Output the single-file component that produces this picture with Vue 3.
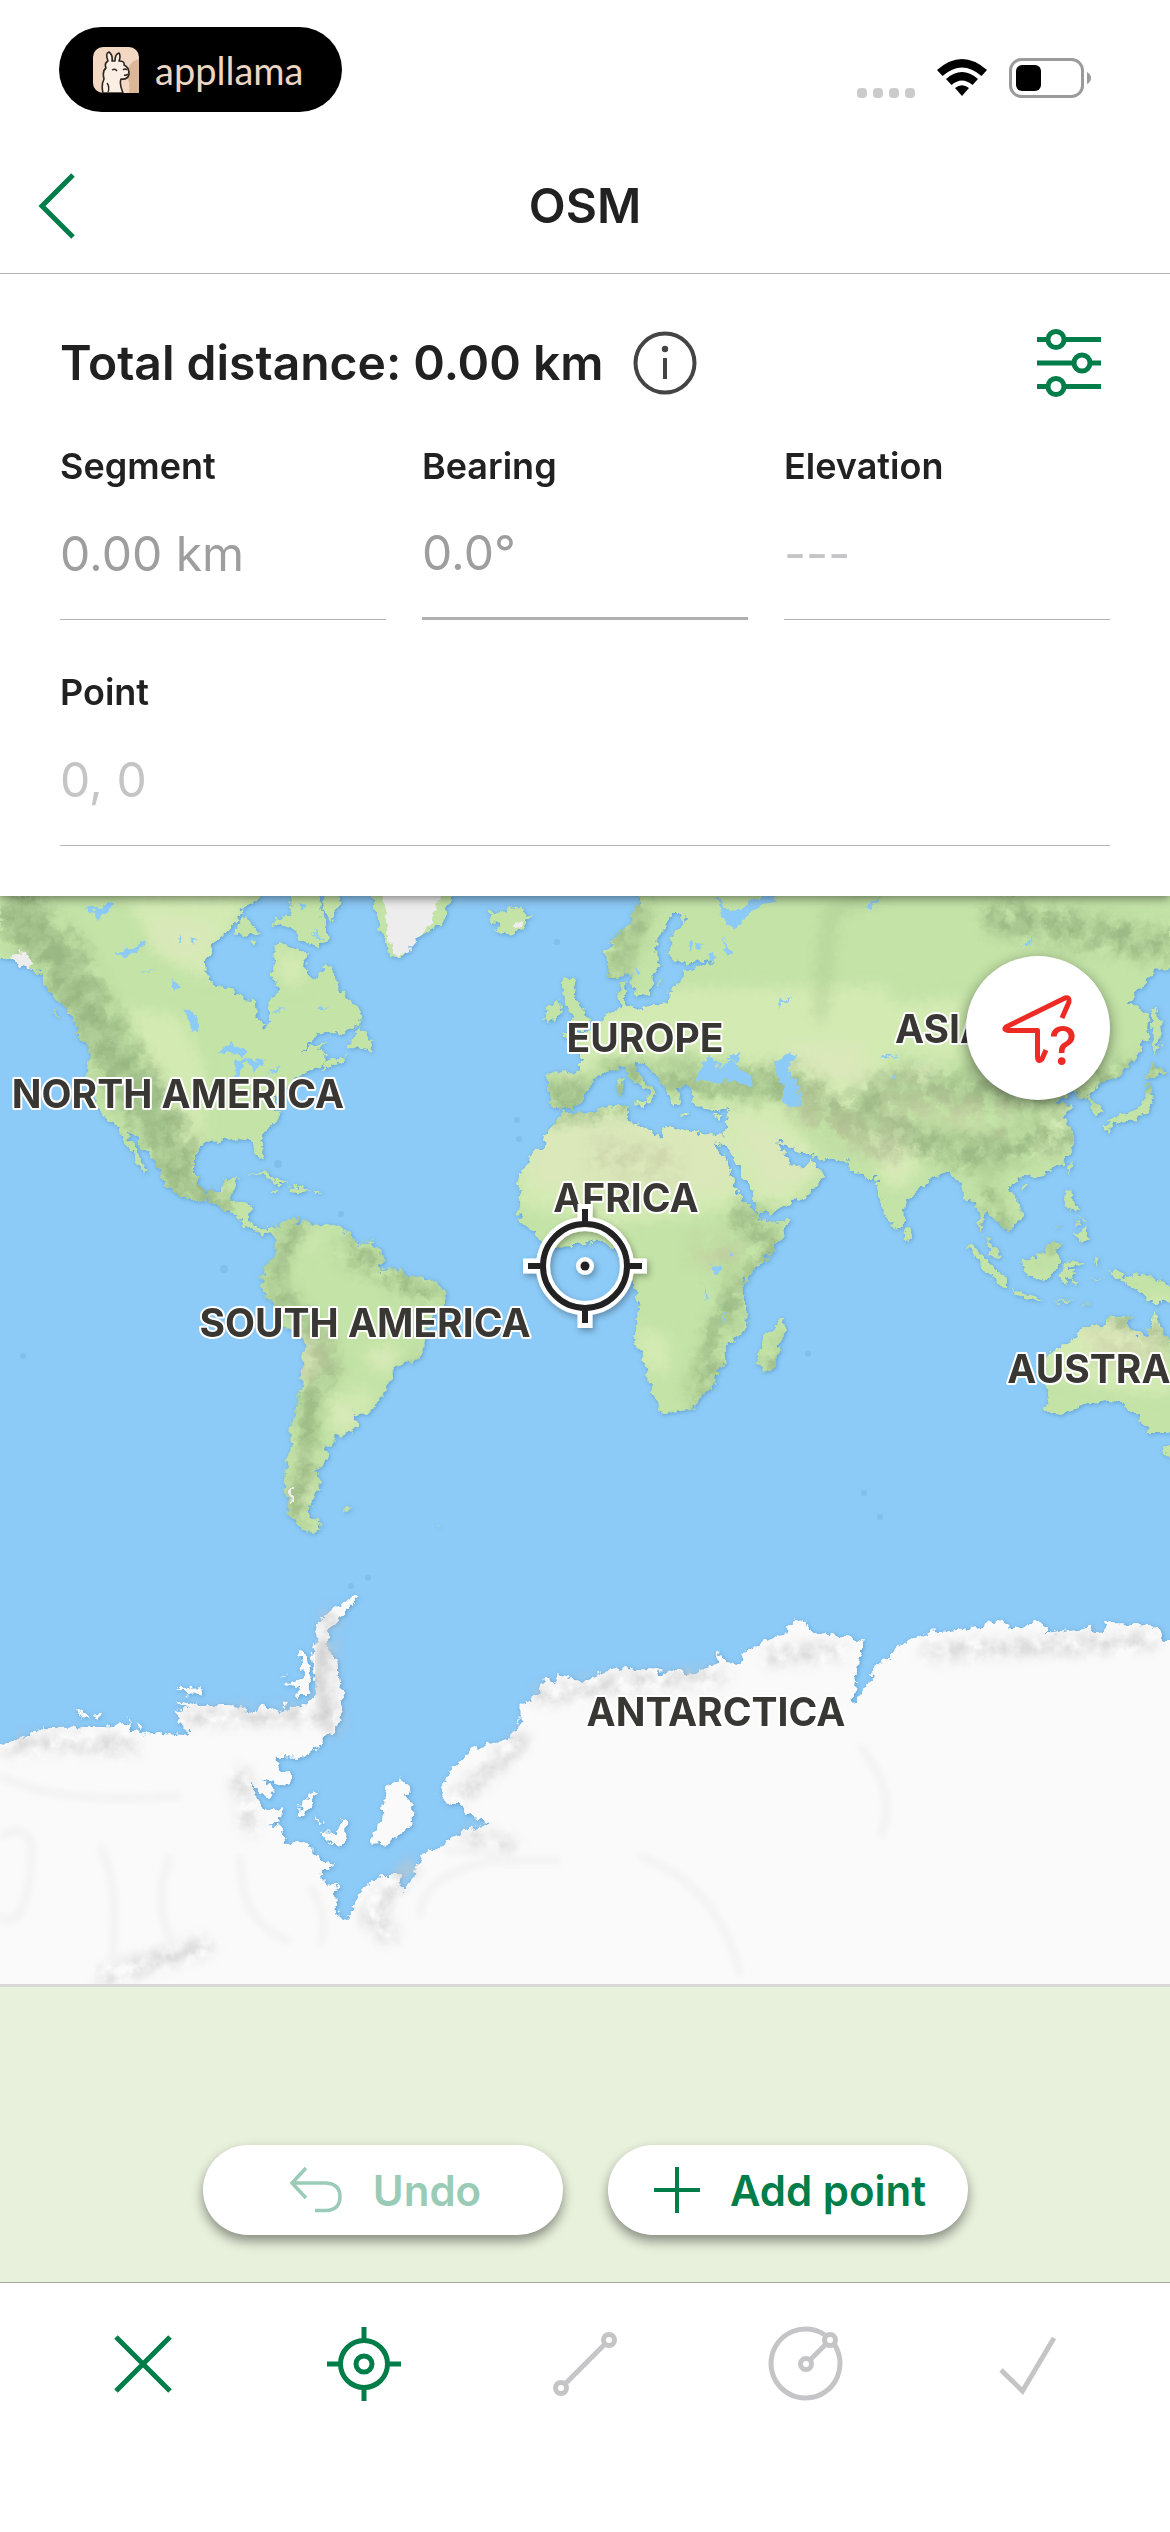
<script setup>
import { reactive } from 'vue'

const fields = reactive([
  { id: 'segment', label: 'Segment', value: '0.00 km', hint: '' },
  { id: 'bearing', label: 'Bearing', value: '0.0°', hint: '', active: true },
  { id: 'elevation', label: 'Elevation', value: '', hint: '---' },
  { id: 'point', label: 'Point', value: '', hint: '0, 0', wide: true },
])

const continents = [
  { name: 'NORTH AMERICA', x: 178, y: 212 },
  { name: 'SOUTH AMERICA', x: 365, y: 441 },
  { name: 'EUROPE', x: 645, y: 156 },
  { name: 'AFRICA', x: 626, y: 316 },
  { name: 'ASIA', x: 942, y: 147 },
  { name: 'AUSTRALIA', x: 1120, y: 487 },
  { name: 'ANTARCTICA', x: 716, y: 830 },
]
</script>

<template>
  <div class="screen">
    <div class="status">
      <div class="pill">
        <svg class="llama" viewBox="0 0 46 46" aria-hidden="true">
          <rect width="46" height="46" rx="10" fill="#f3d9c3" />
          <path d="M31 24 Q38 34 36 46 H46 V12 Q38 14 36 20Z" fill="#dcb797" />
          <path d="M10 46 Q8 38 11 32 Q9 24 13 21 Q11 16 15 14 Q12 6 16 5 Q20 8 19 14 L22 14 Q22 7 26 6 Q28 9 26 14 Q32 14 31 18 Q36 20 36 27 Q35 33 28 32 Q26 37 30 46Z" fill="#fbeee2" stroke="#2b2521" stroke-width="1.6" stroke-linejoin="round" />
          <path d="M19 23 q3 -2 5 1 M30 23 q2 -2 4 0 M31 28 q2 1 4 -1 M14 36 q3 4 1 9" fill="none" stroke="#2b2521" stroke-width="1.4" />
        </svg>
        <span class="brand">appllama</span>
      </div>
      <div class="signals">
        <span class="dots"><i></i><i></i><i></i><i></i></span>
        <svg width="50" height="38" viewBox="0 0 50 38" aria-hidden="true">
          <path d="M0 11 Q25 -11 50 11 L44.500 17 Q25 0 5.500 17Z M9 20 Q25 6 41 20 L35.500 26 Q25 17 14.500 26Z M18 29 Q25 23.500 32 29 L25 37Z" />
        </svg>
        <svg width="83" height="40" viewBox="0 0 83 40" aria-hidden="true">
          <rect x="1.500" y="1.500" width="72" height="37" rx="11" fill="none" stroke="#9b9b9b" stroke-width="3" />
          <rect x="7" y="7" width="25" height="26" rx="6" />
          <path d="M78 14 Q82 16 82 20 Q82 24 78 26Z" fill="#9b9b9b" />
        </svg>
      </div>
    </div>

    <header class="nav">
      <button class="back" aria-label="Back">
        <svg width="40" height="66" viewBox="0 0 40 66"><path d="M37 2 L6 33 L37 64" fill="none" stroke="#007d49" stroke-width="5" /></svg>
      </button>
      <h1>OSM</h1>
    </header>

    <section class="panel">
      <div class="total">
        <h2>Total distance: 0.00 km</h2>
        <button aria-label="Information">
          <svg width="64" height="64" viewBox="0 0 64 64">
            <circle cx="32" cy="32" r="29.500" fill="none" stroke="#444" stroke-width="4" />
            <path d="M32 27 V48" stroke="#444" stroke-width="4" />
            <circle cx="32" cy="18" r="3.200" fill="#444" />
          </svg>
        </button>
        <button class="tune" aria-label="Settings">
          <svg width="64" height="70" viewBox="0 0 64 70" fill="none" stroke="#007d49" stroke-width="5">
            <path d="M0 11.500 H10 M28 11.500 H64 M0 35 H36 M54 35 H64 M0 58.500 H10 M28 58.500 H64" />
            <circle cx="19" cy="11.500" r="8" /><circle cx="45" cy="35" r="8" /><circle cx="19" cy="58.500" r="8" />
          </svg>
        </button>
      </div>
      <div class="fields">
        <div v-for="f in fields" :key="f.id" class="field" :class="{ wide: f.wide, active: f.active }">
          <label :for="f.id">{{ f.label }}</label>
          <input :id="f.id" v-model="f.value" type="text" :placeholder="f.hint" />
        </div>
      </div>
    </section>

    <main class="stage">
      <svg class="map" viewBox="0 0 1170 1088" role="img" aria-label="World map">
        <defs>
          <filter id="coast" x="0" y="0" width="1170" height="1088" filterUnits="userSpaceOnUse" color-interpolation-filters="sRGB">
            <feTurbulence type="fractalNoise" baseFrequency=".13" numOctaves="3" seed="4" result="n" />
            <feDisplacementMap in="SourceGraphic" in2="n" scale="11" xChannelSelector="R" yChannelSelector="G" result="d" />
            <feDropShadow in="d" dx="1" dy="1" stdDeviation="2" flood-color="#3f7fb4" flood-opacity=".55" />
          </filter>
          <filter id="relief" x="0" y="0" width="1170" height="1088" filterUnits="userSpaceOnUse" color-interpolation-filters="sRGB">
            <feGaussianBlur in="SourceGraphic" stdDeviation="7" result="b" />
            <feTurbulence type="fractalNoise" baseFrequency=".06" numOctaves="4" seed="9" />
            <feColorMatrix values="0 0 0 0 0  0 0 0 0 0  0 0 0 0 0  2.2 0 0 0 -.55" result="n" />
            <feComposite in="b" in2="n" operator="in" />
          </filter>
          <filter id="soft" x="-20%" y="-20%" width="140%" height="140%"><feGaussianBlur stdDeviation="7" /></filter>
          <filter id="faint" x="-20%" y="-20%" width="140%" height="140%"><feGaussianBlur stdDeviation="3" /></filter>
          <filter id="lift" x="-30%" y="-30%" width="160%" height="160%"><feDropShadow dx="2" dy="3" stdDeviation="3" flood-opacity=".3" /></filter>

          <g id="land">
            <g transform="matrix(.33333 0 0 .33333 0 -6)">
              <path d="M-20 -20 V205 L40 215 95 232 130 270 160 320 195 350 215 385 240 430 270 480 267 560 290 640 320 690 350 705 375 755 400 800 425 845 440 842 420 800 395 755 378 722 400 730 440 790 480 840 492 885 540 915 590 935 615 925 650 950 700 968 730 1005 760 1025 790 1037 805 1022 835 1050 835 1022 815 1012 795 1010 770 1018 748 990 755 940 715 935 690 935 697 900 712 865 675 868 660 900 615 905 585 860 585 790 615 755 660 755 680 745 715 745 750 750 765 780 780 812 795 808 780 740 840 680 820 640 835 610 880 580 910 550 950 530 985 520 975 500 980 485 950 478 980 455 940 465 905 490 960 430 1040 430 1085 395 1082 365 1040 325 1015 290 1000 250 978 215 960 255 940 265 918 245 920 200 890 175 860 165 820 165 828 210 815 245 838 300 805 340 810 380 795 408 770 380 768 335 735 330 690 295 640 285 620 250 618 210 640 160 680 125 710 95 720 60 760 40 780 20 V-20Z" />
              <path d="M880 -20 H950 L975 100 980 150 960 175 900 150 870 110 820 105 825 85 870 80Z M970 0 H1015 L1020 50 990 90 970 60Z M730 68 750 100 785 128 740 138 708 130 718 90Z M750 155 770 150 760 168Z M1045 475 1080 405 1110 450 1122 485 1080 475Z M960 540 985 515 1038 498 1025 517Z M740 858 790 845 862 882 830 882 790 856Z M862 905 885 888 935 900 900 910Z M948 903 H970 V909 H948Z M816 903 H840 V909 H816Z M218 420 250 430 288 470 280 487 240 445Z M160 353 180 388 168 380Z" />
              <path d="M1105 -20 1125 60 1150 130 1175 200 1205 205 1240 160 1330 90 1370 -20Z" />
            </g>
            <g transform="matrix(.33333 0 0 .33333 0 294)">
              <path d="M815 120 850 95 895 80 890 110 910 92 960 105 1010 100 1050 140 1070 158 1110 155 1140 180 1152 212 1135 240 1190 235 1225 260 1280 262 1325 290 1337 320 1325 355 1295 385 1278 450 1260 505 1215 520 1180 540 1172 580 1145 620 1110 670 1075 675 1055 660 1072 705 1055 730 1010 735 1005 765 970 770 985 795 968 830 945 850 965 875 940 920 925 965 970 1018 930 1030 890 1005 865 965 855 900 850 860 870 780 872 710 895 650 900 590 910 520 910 450 850 410 820 350 782 290 790 240 830 185Z M1022 965 1035 950 1060 955 1040 963Z M1305 1000 1325 1015 1318 1003Z" />
            </g>
            <g transform="matrix(.33333 0 0 .34435 480 -6)">
              <path d="M500 -20 460 80 400 140 378 180 385 245 410 258 445 235 455 280 480 315 510 295 520 250 540 220 525 170 545 120 575 70 615 70 610 95 575 130 572 190 600 215 665 205 700 210 650 225 610 230 600 270 570 285 568 325 530 335 465 345 440 335 435 315 440 270 418 275 415 310 430 345 385 355 370 380 335 400 310 420 250 415 300 470 300 530 205 530 205 600 215 625 245 640 300 625 315 590 355 540 385 525 430 515 460 560 505 585 500 615 515 620 520 590 535 590 490 550 465 515 468 495 500 510 545 560 570 600 585 632 605 610 585 575 615 570 635 575 640 615 670 635 720 640 748 630 740 680 730 710 665 710 580 688 555 690 545 720 510 705 480 685 440 665 445 628 380 632 320 650 250 648 200 705 195 735 145 780 115 830 118 900 115 945 170 1005 210 1035 290 1030 360 1018 400 1040 440 1040 450 1080 455 1150 480 1210 457 1290 490 1360 505 1430 545 1520 630 1510 705 1435 710 1390 740 1375 735 1330 800 1275 800 1215 780 1160 815 1110 870 1060 905 1010 930 955 850 965 830 940 790 900 765 860 745 800 705 730 730 745 760 770 800 850 830 905 835 945 870 935 970 895 1010 860 1032 825 995 780 980 800 930 800 915 760 890 730 920 735 960 765 1000 770 1030 785 1115 785 1160 840 1185 830 1220 830 1220 -20Z" />
              <path d="M250 250 290 265 275 300 305 340 332 375 310 410 255 412 280 380 255 325Z M195 388 200 345 240 320 245 360Z M25 60 60 65 120 50 150 75 140 110 90 130 45 120 65 100 30 95Z M465 615 500 610 495 635Z M416 545 430 540 430 595 416 600Z M597 652 630 655 615 660Z M702 658 725 652 715 664Z M835 1370 850 1300 880 1275 908 1235 918 1270 900 1330 880 1395 850 1395Z M532 265 542 260 535 285Z" />
            </g>
            <g transform="matrix(.33333 0 0 .36996 860 -6)">
              <path d="M-40 -20 H950 V215 H890 L800 305 840 315 868 350 860 400 830 450 780 500 735 515 680 555 715 575 728 600 705 618 690 570 640 550 585 568 640 585 605 610 635 650 635 690 610 740 540 770 490 780 445 800 485 860 485 895 440 920 410 890 375 870 370 900 360 930 385 945 410 970 425 1000 390 985 380 950 355 925 360 880 345 835 320 840 305 800 265 760 220 775 140 840 130 900 105 925 75 880 50 800 45 775 0 765 -40 760Z" />
              <path d="M875 320 890 315 908 400 880 450Z M875 465 920 490 870 512 855 505Z M862 525 880 540 878 570 860 605 810 625 745 635 740 622 800 605 845 578Z M732 635 755 632 745 662Z M617 752 637 735 628 770Z M480 800 505 795 490 815Z M618 815 640 815 638 850 662 868 625 865 612 840Z M640 890 655 905 645 910Z M662 880 680 900 668 900Z M640 935 680 912 693 945 665 950Z M580 922 610 900 588 922Z M320 958 345 965 385 1005 440 1050 442 1078 400 1055 360 1010Z M445 1083 480 1085 550 1105 500 1107Z M485 1000 530 990 580 945 603 960 585 975 600 1000 565 1055 500 1045Z M610 1018 625 1005 680 1003 660 1013 620 1020 625 1030 655 1028 635 1040 645 1065 620 1045 612 1078 602 1045Z M705 1000 718 995 710 1020Z M690 1050 740 1050 715 1055Z M580 1110 650 1110 620 1116Z M660 1125 700 1108 670 1124Z M750 1025 785 1030 790 1050 830 1035 880 1045 950 1080 950 1110 880 1117 830 1080 790 1060 760 1045Z M130 920 145 910 155 940 140 950Z" />
              <path d="M555 1405 568 1370 550 1310 560 1260 640 1215 680 1175 730 1180 750 1145 815 1155 805 1185 865 1210 885 1135 905 1190 950 1240 950 1465 870 1465 835 1420 810 1415 785 1385 745 1378 680 1390 600 1420 570 1420Z M912 1500 950 1508 V1560 L925 1530Z" />
            </g>
          </g>
          <mask id="landmask"><use href="#land" fill="#fff" /></mask>
        </defs>

        <rect width="1170" height="1088" fill="#8ccaf7" />
        <g fill="#78b4e2" opacity=".5">
          <circle cx="557" cy="46" r="3" /><circle cx="517" cy="224" r="3" /><circle cx="519" cy="243" r="3" /><circle cx="341" cy="318" r="3" /><circle cx="224" cy="373" r="4" /><circle cx="23" cy="460" r="3" /><circle cx="808" cy="458" r="3" /><circle cx="368" cy="682" r="3" /><circle cx="351" cy="690" r="3" /><circle cx="864" cy="597" r="3" /><circle cx="880" cy="621" r="3" /><circle cx="278" cy="268" r="4" />
        </g>

        <g filter="url(#coast)">
          <use href="#land" fill="#c3e3a7" />
          <g mask="url(#landmask)">
            <g fill="#d3eab3" filter="url(#soft)">
              <path d="M125 0 H250 L215 60 208 85 160 60Z M125 110 L180 120 205 170 205 240 190 270 150 180Z M275 55 310 60 300 92 278 85Z M295 345 330 335 300 360Z M350 490 370 495 370 520 355 520Z M325 500 340 495 355 520 340 540Z M363 455 400 450 385 480Z M300 560 320 545 310 620 290 610Z" />
              <path d="M600 120 670 92 890 90 890 270 850 230 790 190 730 160 600 165 560 200 560 160Z M520 230 570 210 780 205 820 270 790 310 740 310 690 320 610 330 520 310Z M635 430 670 440 670 480 640 470Z M860 230 910 230 940 250 905 290 885 290Z" />
              <path d="M870 110 960 100 960 165 860 150Z M1060 210 1075 210 1065 255 1035 265 1040 220Z M1040 430 1080 410 1170 400 1170 500 1120 495 1050 480Z" />
            </g>
            <g fill="#dae8ba" filter="url(#soft)">
              <path d="M540 230 600 215 720 225 740 290 700 300 560 300 525 280Z M735 215 800 250 820 275 770 300 740 250Z M150 20 215 30 195 70 155 50Z M365 460 395 455 385 475Z M332 515 350 510 355 535 335 530Z M305 430 320 440 318 480 303 495Z M880 175 950 165 920 190Z M1075 440 1140 410 1160 450 1100 470Z M780 150 860 145 870 190 810 180Z M870 225 910 230 900 290 885 270Z" />
            </g>
            <g fill="none" stroke="#a3c18c" stroke-linecap="round" stroke-linejoin="round" filter="url(#soft)" opacity=".65">
              <path d="M20 20 L60 60 95 130 135 190 160 230" stroke-width="34" />
              <path d="M150 230 L180 280 200 298" stroke-width="22" />
              <path d="M300 330 L275 370 280 400 318 440 330 470 312 500 305 570 295 610" stroke-width="12" />
              <path d="M730 190 L790 185 830 215 880 235 M865 205 L900 190 1000 200 M865 215 L905 235 970 250 990 255 M970 170 L1050 190" stroke-width="13" />
              <path d="M605 170 H640 M670 165 H690 M550 190 H590 M620 80 L640 20 M555 215 L600 208 M740 310 L770 320 M990 280 L1000 240 M1000 30 L1100 30 1150 50" stroke-width="13" />
              <path d="M725 350 L735 410 715 440 M690 490 L710 470 M880 -5 L830 15 820 120 M385 530 L420 460" stroke-width="8" />
            </g>
            <g fill="none" stroke="#93b07d" stroke-linecap="round" filter="url(#relief)" opacity=".75">
              <path d="M20 20 L60 60 95 130 135 190 170 250 205 302" stroke-width="54" />
              <path d="M300 320 L270 375 280 400 318 440 330 470 312 500 305 570 295 630" stroke-width="20" />
              <path d="M720 190 L790 185 830 215 890 245 M865 205 L900 190 1020 200 1150 180 M865 225 L905 240 970 260 1010 250 1060 240 M1000 20 L1170 50" stroke-width="36" />
              <path d="M560 200 H620 M620 180 L700 185 M610 80 L640 10 M540 215 L620 208 M740 320 L770 350 725 420 700 500 M790 450 L775 470 M350 355 L430 400" stroke-width="26" />
              <path d="M990 300 L1000 340 M1040 350 L1060 330 M1130 350 L1170 365 M1090 410 L1170 440" stroke-width="24" />
            </g>
            <g fill="none" stroke="#c4c5a0" stroke-width="36" filter="url(#relief)" opacity=".5">
              <path d="M790 200 L850 240 900 250 M590 260 L680 270 M880 200 L1010 225 M1090 450 L1170 450 M690 350 L740 360 M310 440 L318 480" />
            </g>
          </g>
          <path d="M380 -20 L388 40 396 62 406 58 430 30 446 -20Z M8 62 L20 54 30 64 32 74 22 70 10 66Z M512 30 L520 25 524 29 516 33Z M289 592 H293 V607 H290Z" fill="#eeeded" />
          <g fill="#8ccaf7">
            <path transform="matrix(.33333 0 0 .33333 0 -6)" d="M650 490 690 455 735 478 742 498 700 493Z M703 560 703 510 738 503 718 562Z M735 508 790 505 797 530 775 525 760 548Z M790 548 845 535 830 548Z M550 355 580 370 600 425 575 425 560 390Z M350 190 400 175 445 150 420 178 370 202Z M255 60 340 35 325 70 285 95 290 70Z M420 250 470 235 440 240Z M512 258 535 290 525 300Z M530 135 545 150 535 160Z M570 145 585 158 575 162Z M955 345 990 350 965 358Z M820 360 860 357 835 368Z M900 35 915 50 900 60Z M935 120 970 150 950 145Z" />
            <path transform="matrix(.33333 0 0 .34435 480 -6)" d="M648 550 665 500 690 480 705 505 730 510 755 498 815 545 812 568 740 555 690 562Z M732 492 785 468 768 500Z M880 512 905 482 952 475 945 500 920 512 940 550 960 570 962 628 920 632 902 605 915 575 890 545Z M705 20 760 65 800 45 850 10 885 0 890 35 850 40 800 70 765 115 735 90Z M675 180 690 175 710 195 700 212Z M728 130 750 185 735 185Z M620 150 640 145 635 185Z M645 160 670 158 655 175Z M695 1092 725 1090 715 1122 700 1115Z M663 1135 687 1190 680 1190Z M725 1205 736 1258 728 1255Z M745 1038 755 1060 748 1060Z M900 345 905 318 938 315 910 325Z M465 235 480 232 475 252Z" />
            <path transform="matrix(.33333 0 0 .36996 860 -6)" d="M60 462 68 445 120 445 70 455Z M90 506 H115 V511 H90Z M5 38 30 38 60 15 40 50Z M490 155 515 120 510 150Z" />
          </g>
          <g fill="#fafafa">
            <path transform="matrix(.38270 0 0 .33333 0 664)" d="M-20 565 45 538 110 505 270 500 335 490 335 465 345 515 375 520 440 520 495 528 455 455 490 445 450 420 520 435 600 435 670 460 690 430 730 455 800 435 828 400 815 290 826 250 828 190 866 150 928 104 940 110 900 155 860 210 850 260 875 290 890 360 898 430 880 500 830 560 790 595 720 590 735 630 768 650 745 675 680 655 718 690 700 715 655 670 685 750 735 745 730 790 700 795 735 800 745 855 790 845 850 905 877 912 840 935 845 975 892 968 875 1000 888 1078 908 1083 945 990 1000 945 1045 945 1048 990 1075 965 1100 880 1140 865 1220 810 1282 790 1215 765 1210 735 1180 735 1150 710 1170 640 1240 565 1335 535 1360 480 1360 435 1410 400 1425 355 1450 370 1460 345 1520 370 1590 345 V1400 H-20Z M965 855 1000 760 1010 680 1045 655 1070 680 1060 710 1078 730 1075 800 1010 850Z M780 768 785 730 830 688 795 768Z M820 765 840 790 830 785Z M835 815 885 820 890 780 905 780 905 840 890 858 850 835Z M780 275 795 270 815 350 805 405 770 405 790 385 745 375 795 350Z M460 385 525 382 530 403 490 400Z M730 348 758 338 735 350Z M195 440 235 470 220 475Z M243 460 270 460 250 480Z M365 480 375 490 360 515Z M738 425 750 425 745 448Z" />
            <path transform="matrix(.38270 0 0 .33333 570 664)" d="M0 360 35 370 70 340 140 325 230 325 240 345 265 325 310 345 385 310 385 270 400 300 440 310 460 270 530 235 570 220 570 190 610 180 635 215 768 240 755 300 740 430 780 375 800 310 830 300 870 250 940 215 1080 200 1110 180 1180 210 1215 178 1245 205 1240 222 1360 200 1390 215 1400 190 1500 190 1545 215 1550 240 1590 230 V1400 H0Z" />
          </g>
        </g>
        <path d="M323 745 L318 775 322 800 330 835" fill="none" stroke="#dedede" stroke-width="10" filter="url(#faint)" />
        <g fill="none" stroke="#c4c4c4" stroke-width="16" stroke-linecap="round" filter="url(#relief)" opacity=".7">
          <path d="M330 720 L325 790 335 830 M10 850 L60 845 130 850 M190 820 L320 820 M240 880 L250 930 M460 900 L520 845 M390 1040 L370 1020 410 970 M540 800 L600 790 720 780 M770 760 L840 755 M930 755 L1150 745 M105 1080 L205 1050 M470 940 L510 950" />
        </g>
        <g fill="none" stroke="#efefef" stroke-width="5" filter="url(#faint)">
          <path d="M0 940 Q40 920 30 980 T0 1020 M100 950 Q120 990 112 1060 M170 960 Q150 1010 175 1050 M240 960 Q240 1030 290 1045 M320 1050 Q330 1020 310 990 M420 1020 Q420 980 490 965 H560 M445 955 H510 Q520 940 480 940 M0 880 Q60 910 180 900 M640 960 Q720 990 740 1080 M860 850 Q900 900 880 940" />
        </g>
        <g class="names">
          <text v-for="c in continents" :key="c.name" :x="c.x" :y="c.y">{{ c.name }}</text>
        </g>
        <g filter="url(#lift)" fill="none" stroke="#fff" stroke-width="15">
          <circle cx="585" cy="370" r="42" stroke-width="14" />
          <path d="M585 308 V326 M585 414 V432 M523 370 H541 M629 370 H647" />
          <circle cx="585" cy="370" r="9" fill="#fff" stroke="none" />
        </g>
        <g fill="none" stroke="#222" stroke-width="6">
          <circle cx="585" cy="370" r="42" />
          <path d="M585 313 V329 M585 411 V427 M528 370 H544 M626 370 H642" />
          <circle cx="585" cy="370" r="4.500" fill="#222" stroke="none" />
        </g>
      </svg>

      <button class="locate" aria-label="Location unavailable">
        <svg width="144" height="144" viewBox="0 0 144 144">
          <path d="M96 62 L103 46 Q104 41 99 42 L40 71 Q37 74 42 74.500 H71.500 V101 Q72 107 76 103 L80 94" fill="none" stroke="#ee2a24" stroke-width="5" stroke-linejoin="round" />
          <text x="97" y="109" text-anchor="middle" fill="#ee2a24">?</text>
        </svg>
      </button>

      <div class="actions">
        <button class="action" disabled>
          <svg width="54" height="48" viewBox="0 0 54 48"><path d="M17 2 L3 17 17 32 M4 17 H37 Q51 18 51 30.500 Q51 44 37 44.500 H26" fill="none" stroke="currentColor" stroke-width="3.500" /></svg>
          Undo
        </button>
        <button class="action">
          <svg width="46" height="46" viewBox="0 0 46 46"><path d="M23 0 V46 M0 23 H46" stroke="currentColor" stroke-width="4" /></svg>
          Add point
        </button>
      </div>
    </main>

    <nav class="tools">
      <button aria-label="Close">
        <svg width="76" height="76" viewBox="0 0 76 76"><path d="M11 11 L65 65 M65 11 L11 65" /></svg>
      </button>
      <button aria-label="Point">
        <svg width="76" height="76" viewBox="0 0 76 76"><circle cx="38" cy="38" r="23.500" /><circle cx="38" cy="38" r="8" /><path d="M38 1 V14 M38 62 V75 M1 38 H14 M62 38 H75" /></svg>
      </button>
      <button class="off" aria-label="Line">
        <svg width="76" height="76" viewBox="0 0 76 76"><circle cx="14" cy="62" r="5.500" /><circle cx="62" cy="14" r="5.500" /><path d="M18 58 L58 18" /></svg>
      </button>
      <button class="off" aria-label="Circle">
        <svg width="76" height="76" viewBox="0 0 76 76"><path d="M66 18 A34.500 34.500 0 1 1 57 9" /><circle cx="38" cy="38" r="5.500" /><circle cx="62" cy="14" r="5.500" /><path d="M42 34 L58 18" /></svg>
      </button>
      <button class="off" aria-label="Done">
        <svg width="76" height="76" viewBox="0 0 76 76"><path d="M12 44 L33.500 65 L65 12" /></svg>
      </button>
    </nav>
  </div>
</template>

<style>
body { margin: 0; background: #fff; }
</style>

<style scoped>
.screen {
  display: flex;
  flex-direction: column;
  min-height: 100vh;
  overflow: hidden;
  background: #fff;
  color: #212121;
  font-family: Inter, "Liberation Sans", sans-serif;
}
button {
  display: flex;
  align-items: center;
  justify-content: center;
  padding: 0;
  border: 0;
  background: none;
  font: inherit;
}
svg { display: block; flex: none; }
.status {
  display: flex;
  align-items: center;
  justify-content: space-between;
  height: 139px;
  padding: 0 78px 0 59px;
  box-sizing: border-box;
}
.pill {
  display: flex;
  align-items: center;
  gap: 16px;
  width: 283px;
  height: 85px;
  padding-left: 34px;
  box-sizing: border-box;
  border-radius: 43px;
  background: #000;
}
.llama { width: 46px; height: 46px; }
.brand {
  color: #ecd5c3;
  font: 400 38px/48px Lato, sans-serif;
}
.signals { display: flex; align-items: center; gap: 22px; padding-top: 16px; }
.dots { display: flex; gap: 6px; align-self: flex-end; }
.dots i { width: 10px; height: 10px; border-radius: 4px; background: #cbcbcb; }
.nav {
  position: relative;
  z-index: 2;
  display: grid;
  grid-template-columns: 1fr auto 1fr;
  align-items: center;
  height: 135px;
  padding: 0 36px;
  box-sizing: border-box;
  border-bottom: 1px solid #b4b4b4;
  background: #fff;
}
.back { justify-self: start; }
h1, h2 { margin: 0; font-size: 48px; line-height: 60px; font-weight: 600; }
.panel {
  position: relative;
  z-index: 1;
  padding: 48px 60px 50px;
  background: #fff;
  box-shadow: 0 2px 10px rgba(0, 0, 0, 0.5);
}
.total { display: flex; align-items: center; gap: 29px; height: 82px; }
.tune { margin-left: auto; padding-right: 9px; }
.fields {
  display: grid;
  grid-template-columns: repeat(3, minmax(0, 1fr));
  gap: 50px 36px;
  padding-top: 40px;
}
.field { display: flex; flex-direction: column; }
.wide { grid-column: 1 / -1; }
label { font-size: 36px; line-height: 44px; font-weight: 600; }
input {
  width: 100%;
  height: 132px;
  padding: 0;
  box-sizing: border-box;
  border: 0;
  border-bottom: 1px solid #b4b4b4;
  border-radius: 0;
  outline: 0;
  background: none;
  color: #9e9e9e;
  font: 400 48px/60px Inter, "Liberation Sans", sans-serif;
}
.active input { border-bottom: 3px solid #b0b0b0; }
input::placeholder { color: #c5c5c7; opacity: 1; }
.stage {
  position: relative;
  flex: 1 0 auto;
  padding-bottom: 295px;
  background: #e8f1dc;
}
.map { width: 100%; height: auto; border-bottom: 3px solid #d8d8d8; }
.names text {
  fill: #393733;
  stroke: #fff;
  stroke-width: 4px;
  stroke-linejoin: round;
  paint-order: stroke;
  text-anchor: middle;
  font-size: 39px;
  font-weight: 700;
}
.locate {
  position: absolute;
  top: 60px;
  right: 60px;
  border-radius: 50%;
  background: #fff;
  box-shadow: 0 4px 14px rgba(0, 0, 0, 0.45);
}
.locate text { font-size: 54px; font-weight: 500; }
.actions {
  position: absolute;
  right: 0;
  bottom: 47px;
  left: 0;
  display: flex;
  justify-content: center;
  gap: 45px;
}
.action {
  gap: 30px;
  width: 360px;
  height: 90px;
  padding-left: 5px;
  border-radius: 45px;
  background: #fff;
  box-shadow: 0 6px 12px rgba(0, 0, 0, 0.42);
  color: #007d49;
  font-size: 42px;
  font-weight: 600;
}
.action:disabled { color: #99cbb6; }
.tools {
  display: grid;
  grid-template-columns: repeat(5, 1fr);
  padding: 0 32px 87px;
  border-top: 1px solid #a3aa9b;
  background: #fff;
}
.tools button { height: 162px; }
.tools svg { fill: none; stroke: #007d49; stroke-width: 5; }
.tools .off svg { stroke: #c5c5c7; }
</style>
